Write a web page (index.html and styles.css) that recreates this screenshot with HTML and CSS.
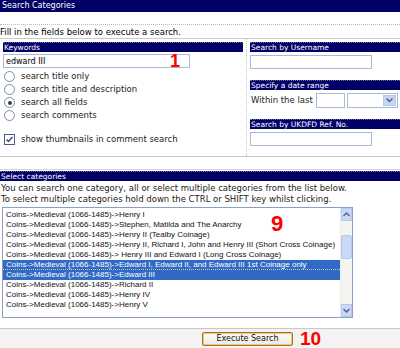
FILE: index.html
```html
<!DOCTYPE html>
<html lang="en">
<head>
  <meta charset="UTF-8">
  <title>Search Categories</title>
  <link rel="stylesheet" href="styles.css">
</head>
<body>

<div class="titleBar">Search Categories</div>
<div class="gap"></div>
<div class="intro">Fill in the fields below to execute a search.</div>

<div class="fields">
  <div class="leftCol">
    <div class="bar">Keywords</div>
    <div class="keyRow">
      <input class="textBox keyBox" type="text" value="edward III">
      <span class="marker m1">1</span>
    </div>
    <label class="opt first"><span class="radio"></span>search title only</label>
    <label class="opt"><span class="radio"></span>search title and description</label>
    <label class="opt"><span class="radio on"></span>search all fields</label>
    <label class="opt"><span class="radio"></span>search comments</label>
    <label class="opt check"><span class="box">
      <svg width="9" height="9" viewBox="0 0 9 9"><path d="M1.5 4.5 L3.5 6.5 L7.5 2" fill="none" stroke="#3a4a6a" stroke-width="1.4"/></svg>
    </span>show thumbnails in comment search</label>
  </div>
  <div class="rightCol">
    <div class="bar">Search by Username</div>
    <input class="textBox sideBox" type="text">
    <div class="bar dateBar">Specify a date range</div>
    <div class="dateRow">
      <span class="within">Within the last</span>
      <input class="textBox numBox" type="text">
      <span class="dropBox"><span class="dropBtn">
        <svg width="7" height="5" viewBox="0 0 7 5"><path d="M0.5 0.5 L3.5 3.5 L6.5 0.5" fill="none" stroke="#4d6185" stroke-width="1.4"/></svg>
      </span></span>
    </div>
    <div class="bar refBar">Search by UKDFD Ref. No.</div>
    <input class="textBox sideBox" type="text">
  </div>
</div>

<div class="spacer"></div>

<div class="bar wide">Select categories</div>
<div class="help">
  You can search one category, all or select multiple categories from the list below.<br>
  To select multiple categories hold down the CTRL or SHIFT key whilst clicking.
</div>

<div class="listWrap">
  <div class="listBox">
    <div class="rows">
      <div class="row">Coins-&gt;Medieval (1066-1485)-&gt;Henry I</div>
      <div class="row">Coins-&gt;Medieval (1066-1485)-&gt;Stephen, Matilda and The Anarchy</div>
      <div class="row">Coins-&gt;Medieval (1066-1485)-&gt;Henry II (Tealby Coinage)</div>
      <div class="row">Coins-&gt;Medieval (1066-1485)-&gt;Henry II, Richard I, John and Henry III (Short Cross Coinage)</div>
      <div class="row">Coins-&gt;Medieval (1066-1485)-&gt; Henry III and Edward I (Long Cross Coinage)</div>
      <div class="row sel focus">Coins-&gt;Medieval (1066-1485)-&gt;Edward I, Edward II, and Edward III 1st Coinage only</div>
      <div class="row sel">Coins-&gt;Medieval (1066-1485)-&gt;Edward III</div>
      <div class="row">Coins-&gt;Medieval (1066-1485)-&gt;Richard II</div>
      <div class="row">Coins-&gt;Medieval (1066-1485)-&gt;Henry IV</div>
      <div class="row">Coins-&gt;Medieval (1066-1485)-&gt;Henry V</div>
    </div>
    <div class="scroll">
      <div class="arrow">
        <svg width="7" height="5" viewBox="0 0 7 5"><path d="M0.5 4 L3.5 1 L6.5 4" fill="none" stroke="#4d6185" stroke-width="1.4"/></svg>
      </div>
      <div class="thumb"></div>
      <div class="track"></div>
      <div class="arrow">
        <svg width="7" height="5" viewBox="0 0 7 5"><path d="M0.5 1 L3.5 4 L6.5 1" fill="none" stroke="#4d6185" stroke-width="1.4"/></svg>
      </div>
    </div>
    <span class="marker m9">9</span>
  </div>
</div>

<div class="footer">
  <button class="execBtn">Execute Search</button>
  <span class="marker m10">10</span>
</div>

</body>
</html>
```

FILE: styles.css
```css
body {
  margin: 0;
  width: 400px;
  height: 348px;
  overflow: hidden;
  background-color: #fff;
  font-family: "DejaVu Sans", Verdana, sans-serif;
  font-size: 8.5px;
  color: #000;
}

.titleBar {
  height: 12px;
  line-height: 12px;
  background-color: #000066;
  color: #fff;
  padding-left: 2px;
  font-size: 8px;
}

.gap {
  height: 12px;
  border-bottom: 1px dotted #b8b8c8;
}

.intro {
  height: 12px;
  line-height: 12px;
  padding-top: 1px;
  border-bottom: 1px solid #c8c8c8;
  font-size: 8.5px;
}

.fields {
  display: flex;
  height: 117px;
  border-bottom: 1px solid #c8c8c8;
}

.leftCol {
  width: 240px;
  padding: 3px 3px 0 3px;
  border-right: 1px dotted #c0c0c0;
}

.rightCol {
  flex: 1;
  padding: 3px 0 0 3px;
}

.bar {
  height: 9px;
  line-height: 9px;
  background-color: #000066;
  color: #fff;
  font-size: 7.5px;
  padding-left: 1px;
  border-top: 1px dotted #6a6aa0;
  white-space: nowrap;
  overflow: hidden;
}

.textBox {
  display: block;
  box-sizing: border-box;
  height: 14px;
  margin: 0;
  padding: 0 2px;
  border: 1px solid #a8bad8;
  font-family: "DejaVu Sans", Verdana, sans-serif;
  font-size: 8px;
  background: #fff;
}

.keyRow {
  position: relative;
  margin-top: 2px;
  height: 14px;
}

.keyBox {
  width: 187px;
}

.marker {
  position: absolute;
  color: #ff0000;
  font-family: "Liberation Sans", Arial, sans-serif;
  font-weight: bold;
}

.m1 {
  left: 167px;
  top: -2px;
  font-size: 18px;
  line-height: 18px;
}

.opt {
  display: flex;
  align-items: center;
  height: 13px;
  line-height: 13px;
  font-size: 8.5px;
  color: #222;
  margin-left: 1px;
  white-space: nowrap;
}

.opt.first {
  margin-top: 2px;
}

.radio {
  width: 9px;
  height: 9px;
  border: 1px solid #7c8aa8;
  border-radius: 50%;
  margin-right: 6px;
  position: relative;
  background: #fff;
}

.radio.on::after {
  content: "";
  position: absolute;
  left: 2.5px;
  top: 2.5px;
  width: 4px;
  height: 4px;
  border-radius: 50%;
  background: #3c3c3c;
}

.check {
  margin-top: 11px;
}

.box {
  width: 9px;
  height: 9px;
  border: 1px solid #4a5e8a;
  margin-right: 6px;
  display: flex;
  align-items: center;
  justify-content: center;
  background: #fff;
}

.sideBox {
  width: 122px;
  margin-top: 3px;
}

.dateBar {
  margin-top: 11px;
}

.dateRow {
  display: flex;
  align-items: center;
  height: 16px;
  margin-top: 2px;
  gap: 2px;
  color: #222;
  white-space: nowrap;
}

.within {
  margin-left: 1px;
  margin-right: 1px;
}

.numBox {
  width: 29px;
  height: 15px;
}

.dropBox {
  box-sizing: border-box;
  display: flex;
  justify-content: flex-end;
  width: 51px;
  height: 15px;
  border: 1px solid #a8bad8;
  padding: 1px;
}

.dropBtn {
  width: 11px;
  background: #c6d5f2;
  border: 1px solid #b4c6ea;
  display: flex;
  align-items: center;
  justify-content: center;
}

.refBar {
  margin-top: 11px;
}

.spacer {
  height: 12px;
  border-bottom: 1px solid #d4d4d4;
}

.wide {
  margin-top: 1px;
}

.help {
  padding: 2px 0 0 1px;
  font-size: 8.5px;
  line-height: 11px;
  height: 24px;
  color: #222;
  white-space: nowrap;
}

.listWrap {
  height: 121px;
  border-bottom: 1px solid #c8c8c8;
}

.listBox {
  position: relative;
  display: flex;
  box-sizing: border-box;
  width: 351px;
  height: 111px;
  margin-left: 2px;
  border: 1px solid #8aa0c4;
  background: #fff;
}

.rows {
  flex: 1;
  overflow: hidden;
  padding: 2px 0 0 0;
  font-family: "Liberation Sans", Arial, sans-serif;
  font-size: 8px;
  color: #111;
}

.row {
  box-sizing: border-box;
  height: 10px;
  line-height: 10px;
  padding-left: 3px;
  white-space: nowrap;
}

.row.sel {
  background: #316ac5;
  color: #fff;
}

.row.focus {
  border-bottom: 1px dotted #c8c8c8;
  line-height: 9px;
}

.scroll {
  width: 11px;
  display: flex;
  flex-direction: column;
  background: #f4f4f0;
  border-left: 1px solid #eceaf4;
}

.arrow {
  height: 13px;
  background: #c9d8f5;
  border: 1px solid #b6c8ec;
  box-sizing: border-box;
  display: flex;
  align-items: center;
  justify-content: center;
}

.thumb {
  height: 22px;
  margin-top: 14px;
  background: #c9d8f5;
  border: 1px solid #b6c8ec;
  border-radius: 2px;
}

.track {
  flex: 1;
}

.m9 {
  left: 268px;
  top: 5px;
  font-size: 22px;
  line-height: 22px;
}

.footer {
  position: relative;
  height: 20px;
  background: #f3f3f3;
}

.execBtn {
  position: absolute;
  left: 202px;
  top: 3px;
  width: 91px;
  height: 14px;
  padding: 0;
  border: 1px solid #a0742a;
  border-radius: 2px;
  background: linear-gradient(#fbfbf8, #ecebe4);
  box-shadow: inset 0 0 0 1px #f6c46a;
  font-family: "DejaVu Sans", Verdana, sans-serif;
  font-size: 8px;
  line-height: 12px;
  color: #111;
}

.m10 {
  left: 300px;
  top: 0;
  font-size: 19px;
  line-height: 19px;
}
```
